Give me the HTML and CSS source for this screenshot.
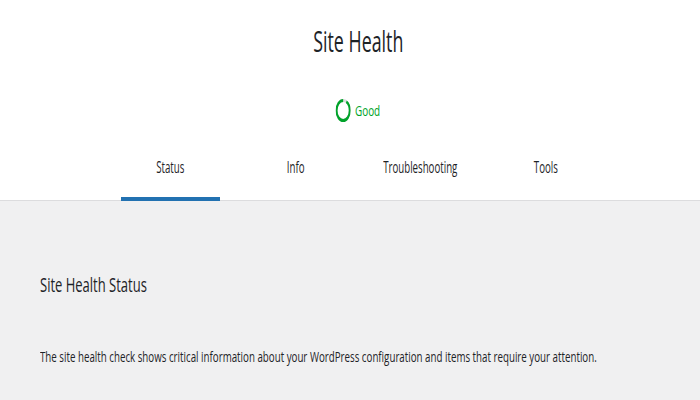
FILE: index.html
```html
<!DOCTYPE html>
<html>
  <head>
    <title>Site Health</title>
    <link rel="stylesheet" href="styles.css">
  </head>
  <body>
    <div class="health-header">
      <h1 class="health-title"><span class="squish">Site Health</span></h1>
      <div class="health-progress">
        <svg class="progress-ring" width="23" height="23" viewBox="0 0 23 23">
          <circle cx="11.5" cy="11.5" r="10" fill="none" stroke="#dcdcde" stroke-width="3"></circle>
          <circle cx="11.5" cy="11.5" r="10" fill="none" stroke="#00a32a" stroke-width="3"
                  pathLength="100" stroke-dasharray="92 8" stroke-dashoffset="17"></circle>
        </svg>
        <span class="progress-label">Good</span>
      </div>
      <nav class="health-tabs">
        <a class="tab active" href="#"><span class="squish">Status</span></a>
        <a class="tab" href="#"><span class="squish">Info</span></a>
        <a class="tab" href="#"><span class="squish">Troubleshooting</span></a>
        <a class="tab" href="#"><span class="squish">Tools</span></a>
      </nav>
    </div>
    <div class="health-body">
      <h2 class="body-title"><span class="squish-left">Site Health Status</span></h2>
      <p class="body-text"><span class="squish-left">The site health check shows critical information about your WordPress configuration and items that require your attention.</span></p>
    </div>
  </body>
</html>
```
FILE: styles.css
```css
body {
  margin: 0;
  background-color: #f0f0f1;
  color: #1d2327;
  font-family: "Open Sans", "Noto Sans", sans-serif;
  overflow: hidden;
}

.squish {
  display: inline-block;
  white-space: nowrap;
  transform: scaleX(0.605);
  transform-origin: center;
}

.squish-left {
  display: inline-block;
  white-space: nowrap;
  transform: scaleX(0.65);
  transform-origin: left center;
}

.health-header {
  background-color: #fff;
  border-bottom: 1px solid #dcdcde;
  padding: 21px 0 0 16px;
  text-align: center;
}

.health-title {
  margin: 0;
  font-size: 29px;
  font-weight: 400;
  line-height: normal;
}

.health-title .squish {
  transform: scaleX(0.615);
}

.health-progress {
  display: flex;
  justify-content: center;
  align-items: center;
  gap: 6px;
  height: 23px;
  margin-top: 38.5px;
  transform: scaleX(0.66);
}

.progress-label {
  color: #00a32a;
  font-size: 15px;
}

.health-tabs {
  display: flex;
  justify-content: center;
  gap: 26px;
  margin-top: 34px;
  margin-bottom: -1px;
}

.tab {
  display: flex;
  justify-content: center;
  width: 99px;
  padding-bottom: 19px;
  border-bottom: 4px solid transparent;
  color: #1d2327;
  font-size: 16px;
  line-height: normal;
  text-decoration: none;
}

.tab.active {
  border-bottom-color: #2271b1;
}

.health-body {
  padding: 70.5px 40px 0;
  overflow: hidden;
}

.body-title {
  margin: 0;
  font-size: 20px;
  font-weight: 400;
  line-height: normal;
}

.body-text {
  margin: 48px 0 0;
  font-size: 15px;
  line-height: normal;
}
```
